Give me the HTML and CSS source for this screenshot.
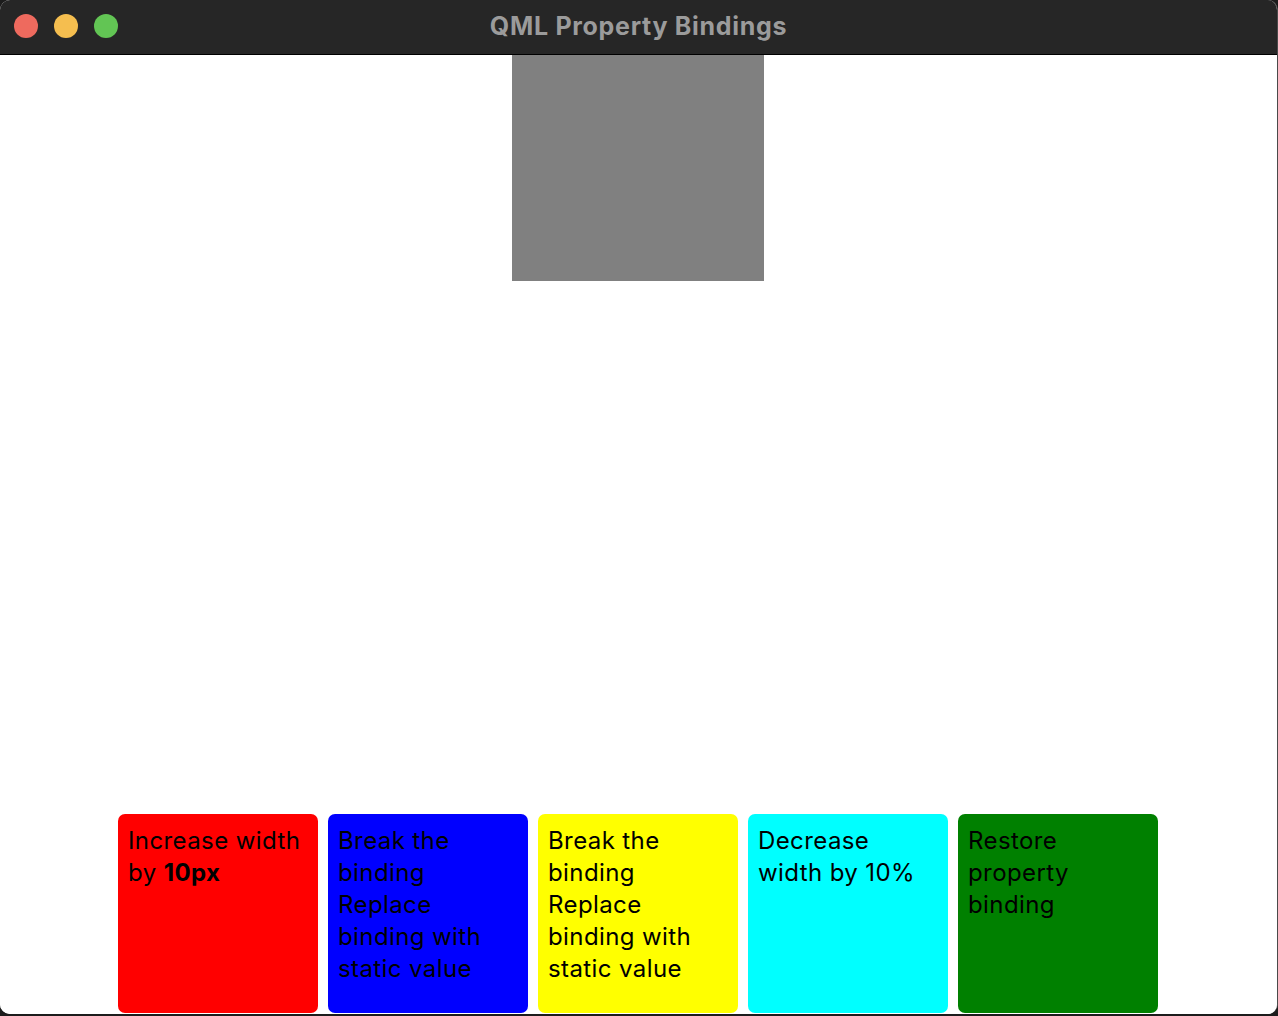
FILE: index.html
```html
<!DOCTYPE html>
<html>
<head>
<meta charset="utf-8">
<title>QML Property Bindings</title>
<link rel="stylesheet" href="styles.css">
</head>
<body>
<div class="window">
  <div class="titlebar">
    <div class="lights">
      <span class="light red"></span>
      <span class="light yellow"></span>
      <span class="light green"></span>
    </div>
    <div class="title">QML Property Bindings</div>
  </div>
  <div class="content">
    <div class="box"></div>
    <div class="buttons">
      <div class="btn b-red">Increase width<br>by <b>10px</b></div>
      <div class="btn b-blue">Break the<br>binding<br>Replace<br>binding with<br>static value</div>
      <div class="btn b-yellow">Break the<br>binding<br>Replace<br>binding with<br>static value</div>
      <div class="btn b-cyan">Decrease<br>width by 10%</div>
      <div class="btn b-green">Restore<br>property<br>binding</div>
    </div>
  </div>
</div>
</body>
</html>
```
FILE: styles.css
```css
html, body {
  margin: 0;
  padding: 0;
  background: #1c1c1c;
  width: 1278px;
  height: 1016px;
  overflow: hidden;
}
.window {
  width: 1278px;
  height: 1014px;
  border-radius: 10px;
  overflow: hidden;
  display: flex;
  flex-direction: column;
  background: #ffffff;
  box-sizing: border-box;
  border-right: 1px solid #4a4a4a;
}
.titlebar {
  height: 54px;
  background: #262626;
  border-bottom: 1px solid #000;
  position: relative;
  display: flex;
  align-items: center;
  justify-content: center;
  flex: none;
}
.lights {
  position: absolute;
  left: 14px;
  top: 14px;
  display: flex;
  gap: 16px;
}
.light {
  width: 24px;
  height: 24px;
  border-radius: 50%;
  display: block;
}
.red { background: #ee6a5e; }
.yellow { background: #f5be4f; }
.green { background: #62c554; }
.title {
  font-family: Inter, "Noto Sans", sans-serif;
  font-weight: 700;
  font-size: 25px;
  letter-spacing: 0.7px;
  color: #9b9b9b;
  margin-top: -3px;
}
.content {
  flex: 1;
  display: flex;
  flex-direction: column;
  align-items: center;
  padding-right: 1px;
  background: #fff;
}
.box {
  width: 252px;
  height: 226px;
  background: #808080;
}
.buttons {
  margin-top: auto;
  display: flex;
  gap: 10px;
  height: 200px;
  flex: none;
}
.btn {
  width: 200px;
  height: 199px;
  border-radius: 7px;
  box-sizing: border-box;
  padding: 11px 10px 10px;
  font-family: Inter, "Noto Sans", sans-serif;
  font-size: 24px;
  letter-spacing: 0.4px;
  line-height: 32px;
  color: #000;
}
.btn b { font-weight: 700; }
.b-red { background: #ff0000; }
.b-blue { background: #0000ff; }
.b-yellow { background: #ffff00; }
.b-cyan { background: #00ffff; }
.b-green { background: #008000; }
```
